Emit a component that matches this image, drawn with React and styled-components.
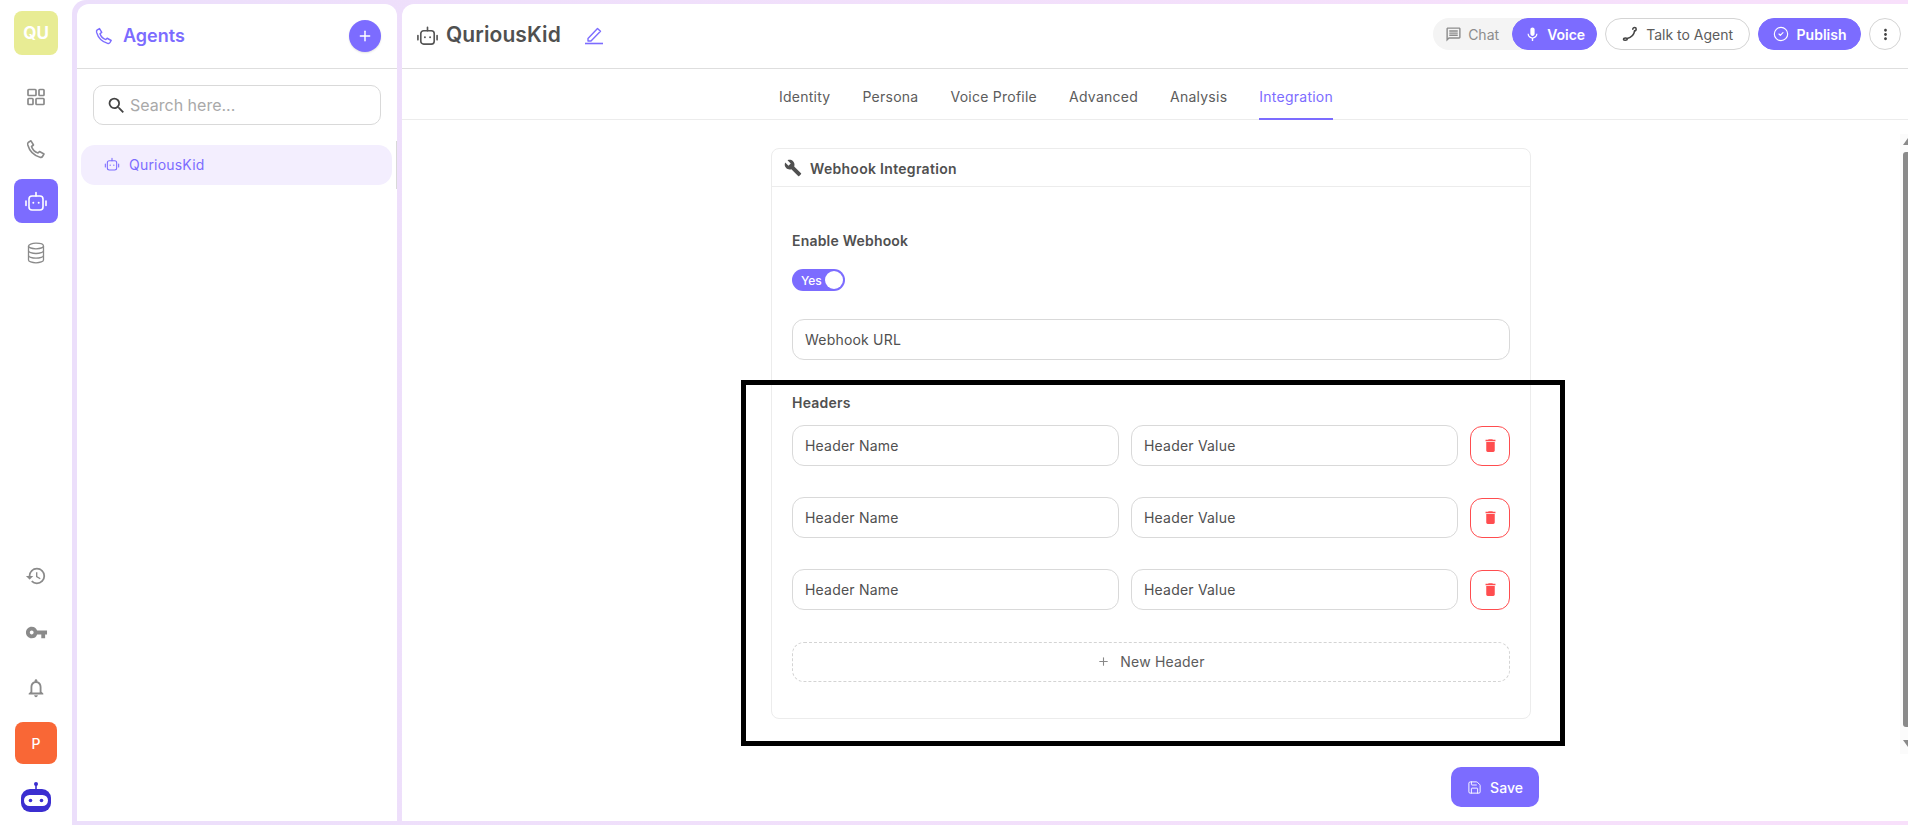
import React from 'react';
import styled, { createGlobalStyle } from 'styled-components';
import { Plus, CircleCheck, Save as SaveIcon } from 'lucide-react';
import { MdSearch, MdBuild, MdDelete, MdMic, MdVpnKey, MdHistory, MdOutlineNotifications, MdMoreVert, MdOutlineMessage } from 'react-icons/md';

const PURPLE = '#7c6cff';
const INK = '#505050';
const FONT = 'Inter, "Liberation Sans", sans-serif';

const Global = createGlobalStyle`
  html, body { margin: 0; padding: 0; height: 100%; background: #fff; }
  * { box-sizing: border-box; }
  body { font-family: ${FONT}; color: ${INK}; }
`;

const Page = styled.div`
  position: relative;
  display: flex;
  width: 100%;
  height: 100vh;
  overflow: hidden;
`;

const Rail = styled.nav`
  width: 72px;
  flex: none;
  display: flex;
  flex-direction: column;
  align-items: center;
  padding: 11px 0 13px;
`;

const Tile = styled.div`
  width: ${(p) => p.$size || 44}px;
  height: ${(p) => p.$size || 44}px;
  border-radius: 8px;
  background: ${(p) => p.$bg || 'transparent'};
  color: ${(p) => p.$fg || '#8a8a8a'};
  display: flex;
  align-items: center;
  justify-content: center;
  font-size: ${(p) => (p.$size ? 14 : 17)}px;
  font-weight: ${(p) => (p.$size ? 500 : 700)};
  flex: none;
`;

const RailTop = styled.div`
  display: flex;
  flex-direction: column;
  gap: 8px;
  margin-top: 20px;
`;

const RailBottom = styled.div`
  display: flex;
  flex-direction: column;
  align-items: center;
  gap: 12px;
  margin-top: auto;
`;

const LogoMark = styled.svg`
  width: 30px;
  height: 30px;
  margin-top: 6px;
  flex: none;
`;

const Frame = styled.div`
  flex: 1;
  min-width: 0;
  display: flex;
  gap: 5px;
  padding: 4px 0 4px 5px;
  background: linear-gradient(90deg, #ecdffb, #f8e0fb);
  border-top-left-radius: 14px;
`;

const AgentsPanel = styled.aside`
  position: relative;
  width: 320px;
  flex: none;
  background: #fff;
  border-radius: 12px 12px 0 0;
`;

const PanelHead = styled.header`
  height: 65px;
  display: flex;
  align-items: center;
  gap: 10px;
  padding: 0 16px 0 18px;
  border-bottom: 1px solid #dedede;
  color: ${PURPLE};
`;

const PanelTitle = styled.h2`
  margin: 0;
  flex: 1;
  font-size: 18px;
  line-height: 22px;
  font-weight: 600;
`;

const RoundAdd = styled.button`
  width: 32px;
  height: 32px;
  padding: 0;
  border: 0;
  border-radius: 50%;
  background: ${PURPLE};
  color: #fff;
  display: flex;
  align-items: center;
  justify-content: center;
  box-shadow: 0 1px 2px rgba(0, 0, 0, 0.12);
`;

const SearchBox = styled.label`
  height: 40px;
  margin: 16px 16px 0;
  padding: 0 12px;
  display: flex;
  align-items: center;
  gap: 3px;
  border: 1px solid #d9d9d9;
  border-radius: 10px;
  color: #444;

  input {
    flex: 1;
    min-width: 0;
    border: 0;
    outline: 0;
    padding: 0;
    background: none;
    font: 400 16px ${FONT};
  }
  input::placeholder { color: #a9a9a9; opacity: 1; }
`;

const AgentItem = styled.div`
  height: 40px;
  margin: 20px 5px 0 4px;
  padding: 0 0 2px 23px;
  display: flex;
  align-items: center;
  gap: 9px;
  border-radius: 14px;
  background: #f3eefe;
  color: ${PURPLE};
  font-size: 14px;
  letter-spacing: 0.2px;
`;

const PanelScroll = styled.div`
  position: absolute;
  top: 137px;
  right: 0;
  width: 1px;
  height: 48px;
  background: #d9d9d9;
`;

const Main = styled.main`
  position: relative;
  flex: 1;
  min-width: 0;
  display: flex;
  flex-direction: column;
  background: #fff;
  border-radius: 12px 0 0 0;
`;

const TopBar = styled.header`
  height: 65px;
  flex: none;
  display: flex;
  align-items: center;
  padding: 0 7px 0 14px;
  border-bottom: 1px solid #dedede;
`;

const TitleGroup = styled.div`
  display: flex;
  align-items: center;
  margin-bottom: 2px;
  color: #555;
`;

const AgentName = styled.h1`
  margin: 0 0 0 7px;
  font-size: 21px;
  line-height: 24px;
  font-weight: 600;
  color: ${INK};
  letter-spacing: 0.1px;
`;

const EditIcon = styled.svg`
  width: 20px;
  height: 20px;
  margin-left: 23px;
  color: ${PURPLE};
`;

const Actions = styled.div`
  margin: 0 0 4px auto;
  display: flex;
  align-items: center;
  gap: 8px;
`;

const Mode = styled.div`
  height: 32px;
  display: flex;
  align-items: center;
  border-radius: 16px;
  background: #f4f4f4;
`;

const ModeChat = styled.span`
  width: 79px;
  padding-left: 12px;
  display: flex;
  align-items: center;
  gap: 6px;
  color: #8c8c8c;
  font-size: 14px;
`;

const Pill = styled.button`
  height: 32px;
  padding: 0 ${(p) => p.$pad || 14}px;
  display: flex;
  align-items: center;
  gap: ${(p) => p.$gap || 8}px;
  border-radius: 16px;
  border: 1px solid ${(p) => (p.$outline ? '#d4d4d4' : PURPLE)};
  background: ${(p) => (p.$outline ? '#fff' : PURPLE)};
  color: ${(p) => (p.$outline ? '#5c5c5c' : '#fff')};
  font: ${(p) => (p.$outline ? 400 : 600)} 14px ${FONT};
  white-space: nowrap;
`;

const CircleBtn = styled.button`
  width: 32px;
  height: 32px;
  padding: 0;
  display: flex;
  align-items: center;
  justify-content: center;
  border: 1px solid #d4d4d4;
  border-radius: 50%;
  background: #fff;
  color: #444;
`;

const Tabs = styled.div`
  height: 51px;
  flex: none;
  display: flex;
  align-items: stretch;
  gap: 32px;
  padding-left: 377px;
  border-bottom: 1px solid #ececec;
`;

const Tab = styled.div`
  display: flex;
  align-items: center;
  margin-bottom: -1px;
  padding-top: 5px;
  font-size: 14px;
  letter-spacing: 0.25px;
  color: ${(p) => (p.$active ? PURPLE : '#5c5c5c')};
  border-bottom: 2px solid ${(p) => (p.$active ? PURPLE : 'transparent')};
`;

const Content = styled.div`
  flex: 1;
  min-height: 0;
  padding: 28px 8px 0 0;
`;

const Card = styled.section`
  width: 760px;
  margin: 0 auto;
  border: 1px solid #ececec;
  border-radius: 8px;
`;

const CardHead = styled.header`
  height: 38px;
  display: flex;
  align-items: center;
  gap: 8px;
  padding: 1px 12px 0;
  border-bottom: 1px solid #ececec;
  color: ${INK};
  font-size: 14px;
  font-weight: 600;
  letter-spacing: 0.3px;
`;

const CardBody = styled.div`
  padding: 44px 20px 36px;
  display: flex;
  flex-direction: column;
`;

const FieldLabel = styled.div`
  height: 20px;
  line-height: 20px;
  font-size: 14px;
  font-weight: 600;
  letter-spacing: 0.2px;
  color: ${INK};
  margin-top: ${(p) => p.$top || 0}px;
`;

const Toggle = styled.div`
  width: 53px;
  height: 22px;
  margin-top: 18px;
  padding: 0 2px 0 9px;
  display: flex;
  align-items: center;
  justify-content: space-between;
  border-radius: 11px;
  background: ${PURPLE};
  color: #fff;
  font-size: 12px;
  font-weight: 500;

  i {
    width: 18px;
    height: 18px;
    border-radius: 50%;
    background: #fff;
  }
`;

const TextField = styled.input`
  width: 100%;
  min-width: 0;
  height: 41px;
  padding: 0 12px;
  border: 1px solid #d9d9d9;
  border-radius: 12px;
  outline: 0;
  background: #fff;
  font: 400 14px ${FONT};
  letter-spacing: 0.2px;
  margin-top: ${(p) => p.$top || 0}px;

  &::placeholder { color: ${INK}; opacity: 1; }
`;

const HeaderRows = styled.div`
  margin-top: 12px;
  display: flex;
  flex-direction: column;
  gap: 31px;
`;

const HeaderRow = styled.div`
  display: grid;
  grid-template-columns: 1fr 1fr 40px;
  gap: 12px;
  align-items: center;
`;

const DeleteBtn = styled.button`
  width: 40px;
  height: 40px;
  padding: 0;
  display: flex;
  align-items: center;
  justify-content: center;
  border: 1px solid #ff4d4f;
  border-radius: 12px;
  background: #fff;
  color: #ff4d4f;
`;

const NewHeader = styled.button`
  height: 40px;
  margin-top: 32px;
  padding: 0 0 1px;
  display: flex;
  align-items: center;
  justify-content: center;
  gap: 10px;
  border: 1px dashed #d4d4d4;
  border-radius: 12px;
  background: #fff;
  color: #5c5c5c;
  font: 400 14px ${FONT};
  letter-spacing: 0.2px;

  svg { color: #888; }
`;

const Footer = styled.footer`
  height: 69px;
  flex: none;
  display: flex;
  justify-content: flex-end;
  align-items: flex-start;
  padding: 15px 369px 0 0;
`;

const SaveBtn = styled.button`
  width: 88px;
  height: 40px;
  display: flex;
  align-items: center;
  justify-content: center;
  gap: 8px;
  padding: 0;
  border: 0;
  border-radius: 10px;
  background: ${PURPLE};
  color: #fff;
  font: 500 14px ${FONT};
`;

const ScrollTrack = styled.div`
  position: absolute;
  right: 0;
  top: 130px;
  width: 8px;
  height: 620px;
  background: #fbfbfb;
`;

const ScrollThumb = styled.div`
  position: absolute;
  right: 0;
  top: 18px;
  width: 5px;
  height: 575px;
  background: #8a8a8a;
  border-radius: 3px 0 0 3px;
`;

const ScrollArrow = styled.div`
  position: absolute;
  right: 0;
  top: ${(p) => (p.$up ? 4 : 606)}px;
  width: 0;
  height: 0;
  border-style: solid;
  border-width: ${(p) => (p.$up ? '0 0 7px 5px' : '7px 0 0 5px')};
  border-color: ${(p) => (p.$up ? 'transparent transparent #8a8a8a transparent' : '#8a8a8a transparent transparent transparent')};
`;

const Highlight = styled.div`
  position: absolute;
  left: 741px;
  top: 380px;
  width: 824px;
  height: 366px;
  border: 5px solid #000;
  pointer-events: none;
`;

const GridIcon = () => (
  <svg width="20" height="20" viewBox="0 0 20 20" fill="none" stroke="currentColor" strokeWidth="1.7">
    <rect x="2" y="2.5" width="8" height="6" rx="0.8" />
    <rect x="13" y="2.5" width="5" height="6" rx="0.8" />
    <rect x="2" y="11.5" width="5" height="6" rx="0.8" />
    <rect x="10" y="11.5" width="8" height="6" rx="0.8" />
  </svg>
);

const HandsetIcon = ({ size = 20 }) => (
  <svg width={size} height={size} viewBox="0 0 20 20" fill="none" stroke="currentColor" strokeWidth="1.6" strokeLinejoin="round">
    <path d="M2.5 3.2 5 1.8 7.5 6 5.5 7.5c1 3 3.5 5.5 6.5 6.5l1.5-1.5 4.5 2.5-1.5 2.5c-.5.8-1.5 1-2.5.7C8 16.5 3.5 12 1.8 6c-.3-1.2 0-2.3.7-2.8z" />
  </svg>
);

const BotIcon = ({ size = 24, weight = 1.7 }) => (
  <svg width={size} height={size} viewBox="0 0 24 24" fill="none" stroke="currentColor" strokeWidth={weight} strokeLinecap="round">
    <rect x="5" y="7" width="14" height="14" rx="3" />
    <path d="M12 3.5V7M2 12v4.5M22 12v4.5" />
    <circle cx="9.3" cy="13.8" r="1" fill="currentColor" stroke="none" />
    <circle cx="14.7" cy="13.8" r="1" fill="currentColor" stroke="none" />
  </svg>
);

const StackIcon = () => (
  <svg width="18" height="22" viewBox="0 0 18 22" fill="none" stroke="currentColor" strokeWidth="1.3">
    <ellipse cx="9" cy="4" rx="7.5" ry="2.8" />
    <path d="M1.5 4v14c0 1.5 3.4 2.8 7.5 2.8s7.5-1.3 7.5-2.8V4" />
    <path d="M1.5 8.7c0 1.5 3.4 2.8 7.5 2.8s7.5-1.3 7.5-2.8M1.5 13.4c0 1.5 3.4 2.8 7.5 2.8s7.5-1.3 7.5-2.8" />
  </svg>
);

const TalkIcon = () => (
  <svg width="16" height="16" viewBox="0 0 16 16" fill="none" stroke="#444" strokeWidth="1.5" strokeLinecap="round">
    <path d="M1.5 13.5c0-1.2 1-1.6 2-1.6 1.2 0 1.8.6 1.8 1.2 0 .8-1 1.2-1.9 1.2-.9 0-1.9-.4-1.9-.8" />
    <path d="M5.2 12.4c3.4-.8 6.8-3.6 7.4-7.6" />
    <path d="M10.8 3.2c0-1 .8-1.7 1.8-1.7 1 0 1.6.7 1.6 1.6 0 1.3-.9 1.8-1.7 1.8" />
  </svg>
);

const Logo = () => (
  <LogoMark viewBox="0 0 30 30">
    <circle cx="15" cy="2" r="2" fill="#3b2ed0" />
    <rect x="14.2" y="2" width="1.6" height="6" fill="#3b2ed0" />
    <rect x="0" y="7" width="30" height="23" rx="9" fill="#3b2ed0" />
    <rect x="3" y="13" width="24" height="11" rx="5.5" fill="#fff" />
    <circle cx="9.5" cy="18.5" r="1.8" fill="#3b2ed0" />
    <circle cx="20.5" cy="18.5" r="1.8" fill="#3b2ed0" />
  </LogoMark>
);

const tabs = ['Identity', 'Persona', 'Voice Profile', 'Advanced', 'Analysis', 'Integration'];

export default function App() {
  return (
    <Page>
      <Global />
      <Rail>
        <Tile $bg="#e8ec94" $fg="#fff">QU</Tile>
        <RailTop>
          <Tile><GridIcon /></Tile>
          <Tile><HandsetIcon /></Tile>
          <Tile $bg={PURPLE} $fg="#fff"><BotIcon size={24} weight={1.6} /></Tile>
          <Tile><StackIcon /></Tile>
        </RailTop>
        <RailBottom>
          <Tile><MdHistory size={22} /></Tile>
          <Tile><MdVpnKey size={23} /></Tile>
          <Tile><MdOutlineNotifications size={22} /></Tile>
          <Tile $size={42} $bg="#f96736" $fg="#fff">P</Tile>
          <Logo />
        </RailBottom>
      </Rail>
      <Frame>
        <AgentsPanel>
          <PanelHead>
            <HandsetIcon size={18} />
            <PanelTitle>Agents</PanelTitle>
            <RoundAdd><Plus size={16} strokeWidth={2.2} /></RoundAdd>
          </PanelHead>
          <SearchBox>
            <MdSearch size={21} />
            <input placeholder="Search here..." />
          </SearchBox>
          <AgentItem>
            <BotIcon size={16} weight={1.6} />
            QuriousKid
          </AgentItem>
          <PanelScroll />
        </AgentsPanel>
        <Main>
          <TopBar>
            <TitleGroup>
              <BotIcon size={23} weight={1.7} />
              <AgentName>QuriousKid</AgentName>
              <EditIcon viewBox="0 0 20 20" fill="none" stroke="currentColor" strokeWidth="1.4">
                <path d="M4 13.5 13.5 3.5l3 2.8L7 16H4z" strokeLinejoin="round" />
                <path d="M1 18.5h18" strokeWidth="1.6" />
              </EditIcon>
            </TitleGroup>
            <Actions>
              <Mode>
                <ModeChat><MdOutlineMessage size={17} />Chat</ModeChat>
                <Pill $pad={11} $gap={6}><MdMic size={17} />Voice</Pill>
              </Mode>
              <Pill $outline $pad={16}><TalkIcon />Talk to Agent</Pill>
              <Pill $pad={13.5}><CircleCheck size={16} strokeWidth={1.7} />Publish</Pill>
              <CircleBtn><MdMoreVert size={17} /></CircleBtn>
            </Actions>
          </TopBar>
          <Tabs>
            {tabs.map((t) => (
              <Tab key={t} $active={t === 'Integration'}>{t}</Tab>
            ))}
          </Tabs>
          <Content>
            <Card>
              <CardHead><MdBuild size={18} />Webhook Integration</CardHead>
              <CardBody>
                <FieldLabel>Enable Webhook</FieldLabel>
                <Toggle>Yes<i /></Toggle>
                <TextField $top={28} placeholder="Webhook URL" />
                <FieldLabel $top={33}>Headers</FieldLabel>
                <HeaderRows>
                  {[0, 1, 2].map((i) => (
                    <HeaderRow key={i}>
                      <TextField placeholder="Header Name" />
                      <TextField placeholder="Header Value" />
                      <DeleteBtn><MdDelete size={17} /></DeleteBtn>
                    </HeaderRow>
                  ))}
                </HeaderRows>
                <NewHeader><Plus size={13} />New Header</NewHeader>
              </CardBody>
            </Card>
          </Content>
          <Footer>
            <SaveBtn><SaveIcon size={15} strokeWidth={1.5} />Save</SaveBtn>
          </Footer>
          <ScrollTrack>
            <ScrollArrow $up />
            <ScrollThumb />
            <ScrollArrow />
          </ScrollTrack>
        </Main>
      </Frame>
      <Highlight />
    </Page>
  );
}
